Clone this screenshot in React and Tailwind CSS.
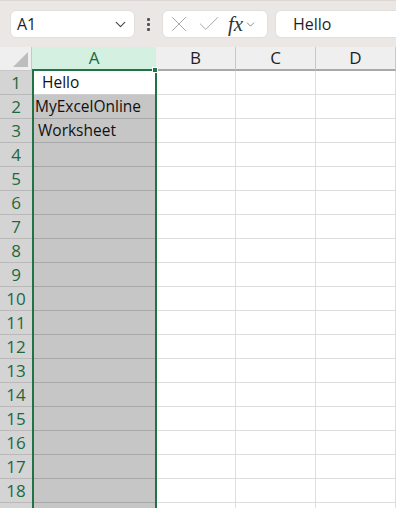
import { ChevronDown, X, Check } from 'lucide-react';

const ROWS = Array.from({ length: 19 }, (_, i) => i + 1);
const VALUES = { 1: 'Hello', 2: 'MyExcelOnline', 3: 'Worksheet' };
const PAD = { 1: 'pl-[10px]', 2: 'pl-[3px]', 3: 'pl-[6px]' };

function Toolbar() {
  return (
    <div className="h-[47px] bg-[#ebe7e5] flex items-center pl-[10px] border-t border-[#ddd8d6]">
      <div className="w-[125px] h-[28px] bg-white rounded-[6px] border border-[#e2dedc] flex items-center justify-between pl-[6px] pr-[5px]">
        <span className="text-[16px] text-[#1f1f1f]">A1</span>
        <ChevronDown size={17} strokeWidth={1.6} className="text-[#444]" />
      </div>
      <div className="w-[27px] flex flex-col items-center gap-[2px]">
        <span className="w-[3px] h-[3px] bg-[#555] rounded-[1px]" />
        <span className="w-[3px] h-[3px] bg-[#555] rounded-[1px]" />
        <span className="w-[3px] h-[3px] bg-[#555] rounded-[1px]" />
      </div>
      <div className="w-[106px] h-[28px] bg-white rounded-[6px] border border-[#e2dedc] flex items-center pl-[3px]">
        <X size={26} strokeWidth={0.9} className="text-[#a5a5a5]" />
        <Check size={26} strokeWidth={0.9} className="text-[#a5a5a5] ml-[4px]" />
        <span className="ml-[6px] text-[21px] italic text-[#333] leading-none" style={{ fontFamily: '"Liberation Serif", serif' }}>fx</span>
        <ChevronDown size={13} strokeWidth={1.6} className="text-[#777] ml-[1px]" />
      </div>
      <div className="ml-[7px] flex-1 h-[28px] bg-white rounded-l-[6px] border border-r-0 border-[#e2dedc] flex items-center pl-[17px]">
        <span className="text-[16px] text-[#1f1f1f]">Hello</span>
      </div>
    </div>
  );
}

function HeaderRow() {
  return (
    <div className="flex h-[24px]">
      <div className="w-[32px] bg-[#efefef] border-r border-b border-[#c8c8c8] relative">
        <div className="absolute right-[3px] bottom-[3px] w-0 h-0 border-l-[15px] border-l-transparent border-b-[15px] border-b-[#bdbdbd]" />
      </div>
      <div className="w-[124px] bg-[#d3f0e0] border-b-2 border-[#217346] flex items-center justify-center text-[17px] text-[#1c6a3b]">A</div>
      {['B', 'C', 'D'].map((c) => (
        <div key={c} className="w-[80px] bg-[#efefef] border-r border-[#c8c8c8] border-b-2 border-b-[#a9a9a9] flex items-center justify-center text-[17px] text-[#1f1f1f]">{c}</div>
      ))}
    </div>
  );
}

export default function App() {
  return (
    <div className="w-[396px] h-[508px] overflow-hidden bg-white" style={{ fontFamily: '"Open Sans", "Noto Sans", sans-serif' }}>
      <Toolbar />
      <HeaderRow />
      <div className="relative">
        {ROWS.map((r) => (
          <div key={r} className="flex h-[24px]">
            <div className="w-[32px] bg-[#d4d4d4] border-b border-[#b9b9b9] flex items-center justify-center pt-[1px] text-[17px] text-[#1c6a3b]">{r < 19 ? r : ''}</div>
            <div className={`w-[124px] border-b ${r === 1 ? 'bg-white border-[#d0d0d0]' : 'bg-[#c6c6c6] border-[#a8a8a8]'} flex items-center pt-[1px] ${PAD[r] || ''} text-[15.5px] text-[#111]`}>
              {VALUES[r] || ''}
            </div>
            {[0, 1, 2].map((i) => (
              <div key={i} className="w-[80px] border-r border-b border-[#dedede]" />
            ))}
          </div>
        ))}
        <div className="absolute left-[32px] top-[-2px] w-[125px] h-[560px] border-l-2 border-r-2 border-[#217346] pointer-events-none" />
        <div className="absolute left-[152px] top-[-4px] w-[6px] h-[6px] bg-[#217346] border border-white" />
      </div>
    </div>
  );
}
